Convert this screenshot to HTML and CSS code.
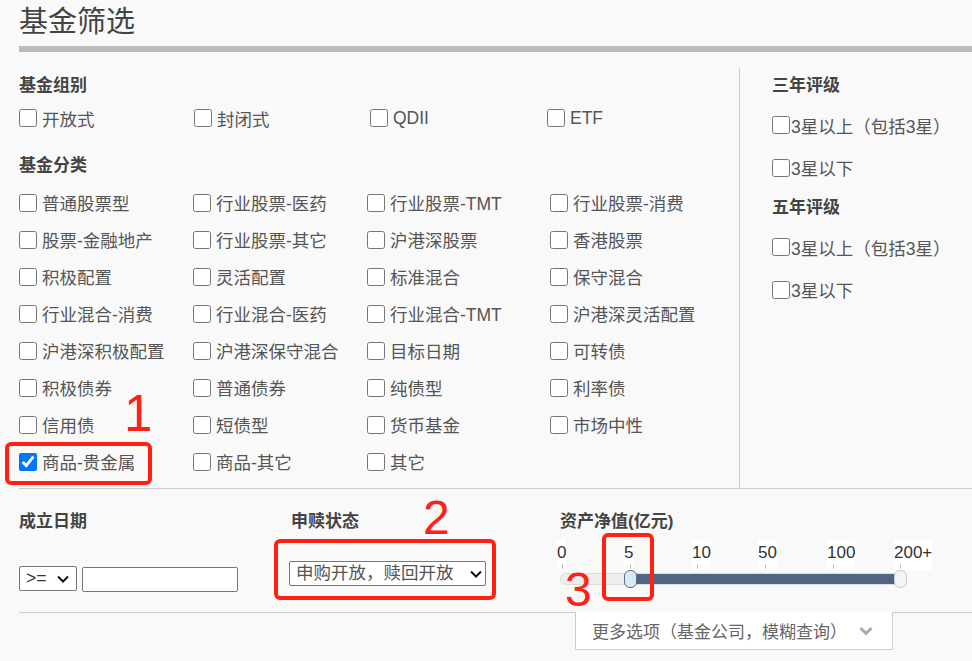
FILE: index.html
```html
<!DOCTYPE html>
<html lang="zh-CN">
<head>
<meta charset="utf-8">
<title>基金筛选</title>
<link rel="stylesheet" href="styles.css">
</head>
<body>
<div class="page">
  <h1 class="title">基金筛选</h1>
  <div class="title-bar"></div>

  <div class="filters">
    <div class="left">
      <h3 class="heading">基金组别</h3>
      <div class="group-grid">
        <label class="opt"><input type="checkbox"><span>开放式</span></label>
        <label class="opt"><input type="checkbox"><span>封闭式</span></label>
        <label class="opt"><input type="checkbox"><span>QDII</span></label>
        <label class="opt"><input type="checkbox"><span>ETF</span></label>
      </div>
      <h3 class="heading heading-gap">基金分类</h3>
      <div class="cat-grid">
        <label class="opt"><input type="checkbox"><span>普通股票型</span></label>
        <label class="opt"><input type="checkbox"><span>行业股票-医药</span></label>
        <label class="opt"><input type="checkbox"><span>行业股票-TMT</span></label>
        <label class="opt"><input type="checkbox"><span>行业股票-消费</span></label>

        <label class="opt"><input type="checkbox"><span>股票-金融地产</span></label>
        <label class="opt"><input type="checkbox"><span>行业股票-其它</span></label>
        <label class="opt"><input type="checkbox"><span>沪港深股票</span></label>
        <label class="opt"><input type="checkbox"><span>香港股票</span></label>

        <label class="opt"><input type="checkbox"><span>积极配置</span></label>
        <label class="opt"><input type="checkbox"><span>灵活配置</span></label>
        <label class="opt"><input type="checkbox"><span>标准混合</span></label>
        <label class="opt"><input type="checkbox"><span>保守混合</span></label>

        <label class="opt"><input type="checkbox"><span>行业混合-消费</span></label>
        <label class="opt"><input type="checkbox"><span>行业混合-医药</span></label>
        <label class="opt"><input type="checkbox"><span>行业混合-TMT</span></label>
        <label class="opt"><input type="checkbox"><span>沪港深灵活配置</span></label>

        <label class="opt"><input type="checkbox"><span>沪港深积极配置</span></label>
        <label class="opt"><input type="checkbox"><span>沪港深保守混合</span></label>
        <label class="opt"><input type="checkbox"><span>目标日期</span></label>
        <label class="opt"><input type="checkbox"><span>可转债</span></label>

        <label class="opt"><input type="checkbox"><span>积极债券</span></label>
        <label class="opt"><input type="checkbox"><span>普通债券</span></label>
        <label class="opt"><input type="checkbox"><span>纯债型</span></label>
        <label class="opt"><input type="checkbox"><span>利率债</span></label>

        <label class="opt"><input type="checkbox"><span>信用债</span></label>
        <label class="opt"><input type="checkbox"><span>短债型</span></label>
        <label class="opt"><input type="checkbox"><span>货币基金</span></label>
        <label class="opt"><input type="checkbox"><span>市场中性</span></label>

        <label class="opt"><input type="checkbox" checked><span>商品-贵金属</span></label>
        <label class="opt"><input type="checkbox"><span>商品-其它</span></label>
        <label class="opt"><input type="checkbox"><span>其它</span></label>
      </div>
    </div>

    <div class="right">
      <h3 class="heading">三年评级</h3>
      <label class="opt rating"><input type="checkbox"><span>3星以上（包括3星）</span></label>
      <label class="opt rating"><input type="checkbox"><span>3星以下</span></label>
      <h3 class="heading heading-rating">五年评级</h3>
      <label class="opt rating"><input type="checkbox"><span>3星以上（包括3星）</span></label>
      <label class="opt rating"><input type="checkbox"><span>3星以下</span></label>
    </div>
  </div>

  <div class="bottom">
    <div class="field field-date">
      <h3 class="heading field-heading">成立日期</h3>
      <div class="date-row">
        <div class="select-wrap select-op">
          <select class="select"><option>&gt;=</option><option>&lt;=</option></select>
          <svg class="chev" width="12" height="8" viewBox="0 0 12 8"><polyline points="1,1.5 6,6.5 11,1.5" fill="none" stroke="#111" stroke-width="2"/></svg>
        </div>
        <input type="text" class="date-input">
      </div>
    </div>

    <div class="field field-status">
      <h3 class="heading field-heading">申赎状态</h3>
      <div class="select-wrap select-status">
        <select class="select"><option>申购开放，赎回开放</option></select>
        <svg class="chev" width="12" height="8" viewBox="0 0 12 8"><polyline points="1,1.5 6,6.5 11,1.5" fill="none" stroke="#111" stroke-width="2"/></svg>
      </div>
    </div>

    <div class="field field-asset">
      <h3 class="heading field-heading">资产净值(亿元)</h3>
      <div class="slider">
        <span class="grid-label" style="left:-3px">0</span>
        <span class="grid-label" style="left:64px">5</span>
        <span class="grid-label" style="left:132px">10</span>
        <span class="grid-label" style="left:198px">50</span>
        <span class="grid-label" style="left:267px">100</span>
        <span class="grid-label" style="left:334px">200+</span>
        <span class="tick" style="left:2px"></span>
        <span class="tick" style="left:70px"></span>
        <span class="tick" style="left:137px"></span>
        <span class="tick" style="left:205px"></span>
        <span class="tick" style="left:273px"></span>
        <span class="tick" style="left:340px"></span>
        <div class="track"></div>
        <div class="fill" style="left:70px;width:270px"></div>
        <span class="handle handle-active" style="left:64px"></span>
        <span class="handle handle-end" style="left:334px"></span>
      </div>
    </div>
  </div>

  <div class="more">
    <span>更多选项（基金公司，模糊查询）</span>
    <svg class="more-chev" width="14" height="10" viewBox="0 0 14 10"><polyline points="1.5,2 7,7.5 12.5,2" fill="none" stroke="#aaa" stroke-width="3"/></svg>
  </div>
</div>

<div class="mark-box mark-box-1"></div>
<div class="mark-num mark-num-1">1</div>
<div class="mark-box mark-box-2"></div>
<div class="mark-num mark-num-2">2</div>
<div class="mark-box mark-box-3"></div>
<div class="mark-num mark-num-3">3</div>
</body>
</html>
```

FILE: styles.css
```css
html, body {
  margin: 0;
  padding: 0;
}

body {
  background: #f9f9f9;
  font-family: "Liberation Sans", "Noto Sans CJK SC", sans-serif;
  color: #555;
  font-size: 17.5px;
  width: 972px;
  height: 661px;
  overflow: hidden;
  position: relative;
}

.page {
  margin-left: 19px;
}

.title {
  margin: 0;
  padding-top: 4px;
  height: 36px;
  line-height: 36px;
  font-size: 29px;
  font-weight: normal;
  color: #444;
}

.title-bar {
  margin-top: 6px;
  height: 6px;
  background: #bcbcbc;
}

.filters {
  margin-top: 16px;
  display: flex;
  border-bottom: 1px solid #ccc;
}

.left {
  width: 720px;
  border-right: 1px solid #ccc;
  padding-bottom: 8px;
}

.heading {
  margin: 0;
  height: 36px;
  line-height: 36px;
  font-size: 17px;
  font-weight: bold;
  color: #444;
}

.heading-gap {
  margin-top: 16px;
}

.opt {
  display: flex;
  align-items: center;
  gap: 5px;
  white-space: nowrap;
  color: #555;
}

.opt input {
  width: 18px;
  height: 18px;
  margin: 0;
  flex: none;
}

.group-grid {
  display: grid;
  grid-template-columns: 175px 176px 177px auto;
  grid-auto-rows: 28px;
}

.cat-grid {
  display: grid;
  grid-template-columns: 174px 174px 183px auto;
  grid-auto-rows: 37px;
}

.right {
  padding-left: 32px;
}

.rating {
  height: 42px;
  gap: 1px;
}

.rating + .rating {
  height: 43px;
}

.heading-rating {
  margin-top: 1px;
  height: 36px;
}

.bottom {
  display: flex;
  height: 123px;
  border-bottom: 1px solid #ccc;
}

.field-heading {
  margin-top: 15px;
}

.field-date {
  width: 272px;
}

.field-status {
  width: 269px;
}

.field-asset {
  flex: 1;
}

.date-row {
  display: flex;
  align-items: flex-start;
  margin-top: 26px;
}

.select-wrap {
  position: relative;
}

.select {
  appearance: none;
  -webkit-appearance: none;
  display: block;
  height: 25px;
  margin: 0;
  border: 1px solid #767676;
  border-radius: 2px;
  background: #fff;
  font-family: "Liberation Sans", "Noto Sans CJK SC", sans-serif;
  font-size: 17.5px;
  color: #333;
  padding: 0 0 0 6px;
  line-height: 23px;
}

.chev {
  position: absolute;
  top: 9px;
  pointer-events: none;
}

.select-op .select {
  width: 58px;
}

.select-op .chev {
  left: 38px;
}

.date-input {
  margin: 1px 0 0 5px;
  width: 156px;
  height: 25px;
  box-sizing: border-box;
  border: 1px solid #767676;
  border-radius: 2px;
  background: #fff;
  padding: 0 4px;
}

.select-status {
  margin-top: 21px;
  margin-left: -2px;
}

.select-status .select {
  width: 197px;
  color: #555;
}

.select-status .chev {
  left: 181px;
}

.slider {
  position: relative;
  height: 50px;
}

.grid-label {
  position: absolute;
  top: 0;
  height: 30px;
  line-height: 26px;
  background: #fff;
  font-size: 17px;
  color: #333;
}

.tick {
  position: absolute;
  top: 24px;
  width: 1px;
  height: 5px;
  background: #c4c4c4;
}

.track {
  position: absolute;
  left: 0;
  top: 33px;
  width: 344px;
  height: 10px;
  border: 1px solid #ddd;
  border-radius: 6px;
  background: #eee;
}

.fill {
  position: absolute;
  top: 34px;
  height: 10px;
  background: #4f6583;
}

.handle {
  position: absolute;
  top: 30px;
  width: 11px;
  height: 16px;
  border-radius: 6px;
}

.handle-active {
  background: #dbe8f5;
  border: 1px solid #56708f;
}

.handle-end {
  background: #f4f4f4;
  border: 1px solid #ccc;
}

.more {
  position: relative;
  margin-top: -1px;
  margin-left: 556px;
  width: 300px;
  height: 37px;
  background: #fff;
  border: 1px solid #ccc;
  border-top: none;
  display: flex;
  align-items: center;
  padding-left: 16px;
  box-sizing: content-box;
  font-size: 17px;
  color: #666;
  gap: 12px;
}

.more-chev {
  margin-top: 1px;
}

.mark-box {
  position: absolute;
  border: 4px solid #ff2214;
  border-radius: 6px;
  box-sizing: border-box;
}

.mark-box-1 {
  left: 5px;
  top: 442px;
  width: 147px;
  height: 43px;
}

.mark-box-2 {
  left: 274px;
  top: 539px;
  width: 222px;
  height: 61px;
}

.mark-box-3 {
  left: 602px;
  top: 533px;
  width: 52px;
  height: 68px;
}

.mark-num {
  position: absolute;
  color: #ff2214;
  font-family: "Liberation Sans", sans-serif;
  font-size: 48px;
  line-height: 48px;
}

.mark-num-1 {
  left: 124px;
  top: 388px;
  font-size: 51px;
  line-height: 51px;
}

.mark-num-2 {
  left: 423px;
  top: 494px;
}

.mark-num-3 {
  left: 565px;
  top: 566px;
}
```
